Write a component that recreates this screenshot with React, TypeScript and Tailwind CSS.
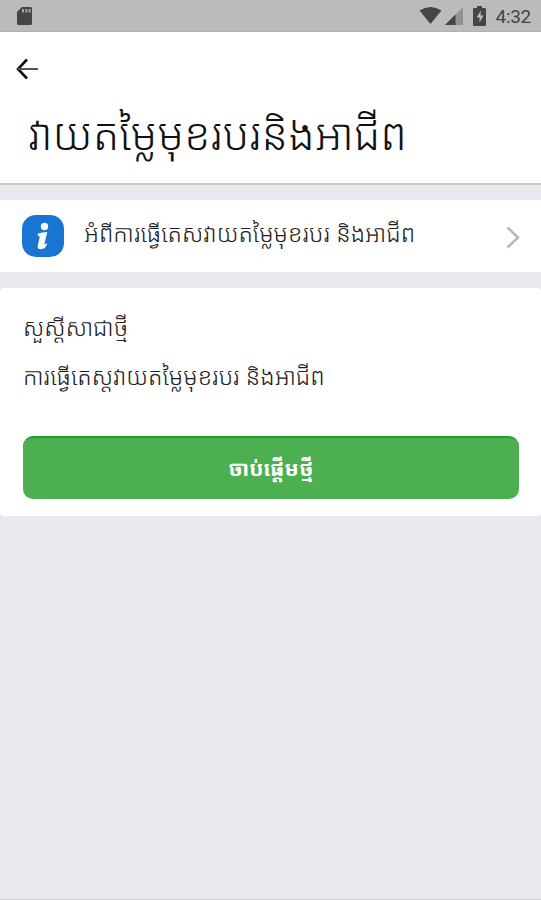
import type { ReactNode } from 'react';

function StatusBar() {
  return (
    <div className="flex h-8 shrink-0 items-center border-b border-[#b2b2b2] bg-[#bbbbbb] pl-4 pr-2.5 text-[#454545]">
      <svg width="17" height="20" viewBox="0 0 17 20">
        <path d="M6 1h8.500A1.500 1.500 0 0 1 16 2.500V17.500a1.500 1.500 0 0 1-1.500 1.500H2.500A1.500 1.500 0 0 1 1 17.500V6z" fill="currentColor" />
        <path d="M6 3h2v3.500H6zM9.300 3h2v3.500h-2zM12.500 3h2v3.500h-2z" fill="#a5a5a5" />
      </svg>
      <div className="ml-auto flex items-center">
        <svg width="23" height="19" viewBox="0 0 23 19">
          <path d="M0.500 4.500Q11.500-2.500 22.500 4.500L11.500 18z" fill="currentColor" />
        </svg>
        <svg className="ml-[3px]" width="18" height="18" viewBox="0 0 18 18">
          <path d="M18 0v18H0z" fill="#929292" />
          <path d="M10.500 7.500V18H0z" fill="currentColor" />
        </svg>
        <svg className="ml-[10px]" width="13" height="20" viewBox="0 0 13 20">
          <path d="M4 0h5v2h2.800A1.200 1.200 0 0 1 13 3.200v15.600a1.200 1.200 0 0 1-1.200 1.200H1.200A1.200 1.200 0 0 1 0 18.800V3.200A1.200 1.200 0 0 1 1.200 2H4z" fill="currentColor" />
          <path d="M8 4.500 3.500 11.500h3v5l4-7h-3z" fill="#bbbbbb" />
        </svg>
        <span className="ml-[10px] mt-0.5 font-[Roboto,sans-serif] text-[19px] leading-none tracking-[-0.3px]">4:32</span>
      </div>
    </div>
  );
}

function Header({ title }: { title: string }) {
  return (
    <header className="h-[153px] shrink-0 border-b-2 border-[#c9c9cd] bg-white">
      <button className="ml-4 mt-[26px] block text-[#111]" aria-label="Back">
        <svg width="23" height="22" viewBox="0 0 23 22" fill="none" stroke="currentColor" strokeWidth="2.600">
          <path d="M11 1.500 2 11l9 9.500" />
          <path d="M2 11h20" strokeWidth="2" stroke="#555" />
        </svg>
      </button>
      <h1 className="ml-7 mt-6 whitespace-nowrap text-[43.3px] font-light leading-[60px] text-[#111]">{title}</h1>
    </header>
  );
}

function InfoIcon() {
  return (
    <svg width="42" height="42" viewBox="0 0 42 42">
      <rect width="42" height="42" rx="14" fill="#1975d2" />
      <circle cx="22.500" cy="11.500" r="3.700" fill="#fff" />
      <path d="M16 18.500q4.500-1.500 9.300-1.500l-3 12.300q1.500 0 3-1.500-1.500 6.500-6.500 6.500-4 0-3-4l2-8.500q-1-.8-2.300-1.200z" fill="#fff" />
    </svg>
  );
}

function ListRow({ children }: { children: ReactNode }) {
  return (
    <div className="mt-[15px] flex h-[72px] shrink-0 items-center bg-white pl-[22px] pr-[21px]">
      <InfoIcon />
      <span className="-mt-1.5 ml-5 whitespace-nowrap text-[23.5px] font-light leading-8 text-[#222]">{children}</span>
      <svg className="ml-auto mt-0.5" width="14" height="23" viewBox="0 0 14 23" fill="none" stroke="#bababa" strokeWidth="2.600">
        <path d="M1.500 1.500 12 11.500 1.500 21.500" />
      </svg>
    </div>
  );
}

export default function App() {
  return (
    <div className="flex h-[900px] w-full flex-col overflow-hidden border-b border-[#cfcfd2] bg-[#e9e8ee] font-['Noto_Sans_Khmer','Khmer_OS','Noto_Sans',sans-serif]">
      <StatusBar />
      <Header title="វាយតម្លៃមុខរបរនិងអាជីព" />
      <ListRow>អំពីការធ្វើតេសវាយតម្លៃមុខរបរ និងអាជីព</ListRow>
      <section className="mt-4 h-[228px] shrink-0 rounded-[4px] bg-white px-[23px] pt-[22px] text-[#222]">
        <p className="whitespace-nowrap text-[23.5px] font-light leading-[34px]">សួស្ដីសាជាថ្មី</p>
        <p className="mt-[15px] whitespace-nowrap text-[23.5px] font-light leading-[34px]">ការធ្វើតេស្តវាយតម្លៃមុខរបរ និងអាជីព</p>
        <button className="mt-[43px] flex h-[63px] w-[496px] items-center justify-center rounded-[10px] border-t-2 border-[#23a02b] bg-[#4caf50] text-[21px] font-bold text-white">
          ចាប់ផ្ដើមថ្មី
        </button>
      </section>
    </div>
  );
}
